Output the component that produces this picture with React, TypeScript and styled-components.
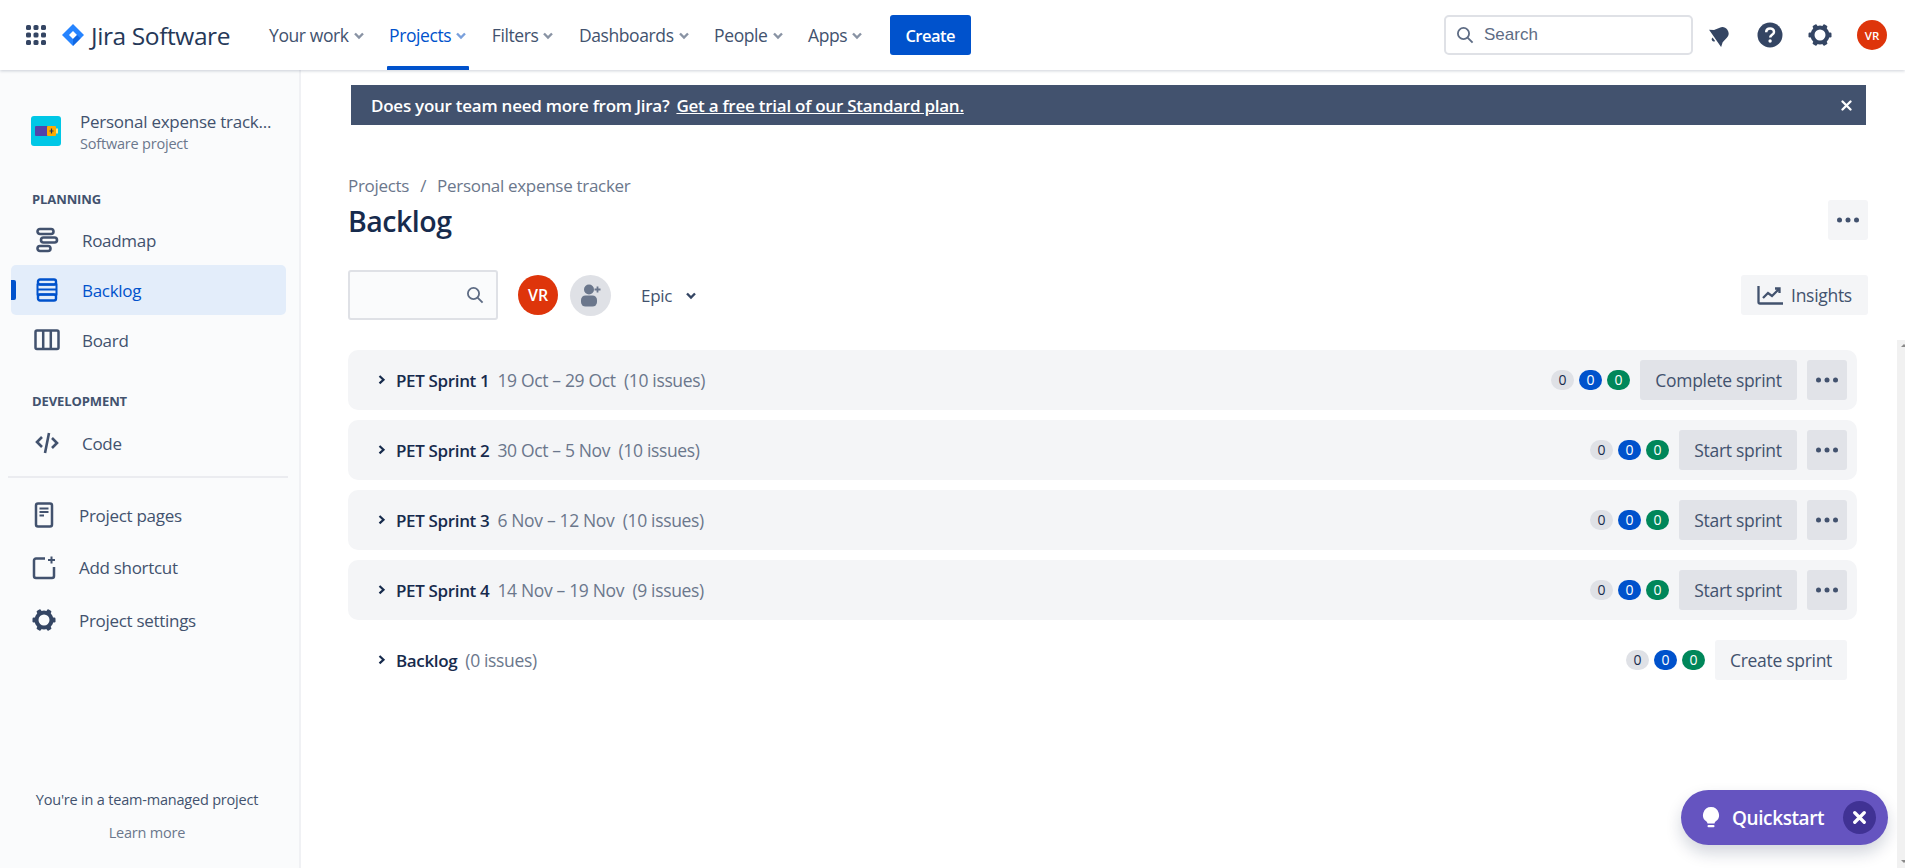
import React from "react";
import styled, { createGlobalStyle } from "styled-components";

const Global = createGlobalStyle`
  html, body { margin: 0; padding: 0; height: 100%; overflow: hidden; background: #fff; }
  body { font-family: "Open Sans", "Noto Sans", "Liberation Sans", sans-serif; color: #42526e; }
  * { box-sizing: border-box; }
`;

const Page = styled.div`
  width: 1905px;
  height: 868px;
  display: flex;
  flex-direction: column;
  overflow: hidden;
`;
const TopBar = styled.header`
  height: 70px;
  flex: none;
  display: flex;
  align-items: center;
  padding: 0 18px 0 26px;
  background: #fff;
  box-shadow: 0 1px 3px rgba(9, 30, 66, 0.2);
  position: relative;
  z-index: 2;
`;
const Logo = styled.div`
  display: flex;
  align-items: center;
  gap: 7px;
  margin-left: 16px;
  width: 204px;
  font-size: 24.5px;
  color: #253858;
  letter-spacing: -0.4px;
`;
const NavItem = styled.div<{ $active?: boolean }>`
  height: 70px;
  display: flex;
  align-items: center;
  gap: 1px;
  padding: 0 3px;
  margin-right: 15.5px;
  font-size: 17.5px;
  letter-spacing: -0.4px;
  color: ${(p) => (p.$active ? "#0052cc" : "#42526e")};
  position: relative;
  svg { color: ${(p) => (p.$active ? "#7aa0dc" : "#8993a4")}; }
`;
const ActiveLine = styled.span`
  position: absolute;
  left: 1px;
  right: 4px;
  bottom: 0;
  height: 4px;
  background: #0052cc;
  border-radius: 1px 1px 0 0;
`;
const CreateButton = styled.button`
  width: 81px;
  height: 40px;
  margin-left: 5px;
  border: 0;
  border-radius: 3px;
  background: #0052cc;
  color: #fff;
  font: 600 16.5px "Open Sans", sans-serif;
  letter-spacing: -0.5px;
`;
const Spacer = styled.div`
  flex: 1;
`;
const SearchBox = styled.div`
  width: 249px;
  height: 40px;
  border: 2px solid #dfe1e6;
  border-radius: 5px;
  display: flex;
  align-items: center;
  gap: 10px;
  padding-left: 10px;
  font: 17px "Liberation Sans", sans-serif;
  color: #5e6c84;
`;
const TopIcons = styled.div`
  display: flex;
  align-items: center;
  margin-left: 15px;
  gap: 25px;
`;
const Avatar = styled.div<{ $size: number; $left?: number }>`
  width: ${(p) => p.$size}px;
  height: ${(p) => p.$size}px;
  margin-left: ${(p) => p.$left ?? 0}px;
  border-radius: 50%;
  background: #de350b;
  color: #fff;
  font-weight: 600;
  font-size: ${(p) => (p.$size > 35 ? 16 : 11.5)}px;
  display: flex;
  align-items: center;
  justify-content: center;
`;
const Body = styled.div`
  flex: 1;
  display: flex;
  min-height: 0;
`;
const Sidebar = styled.aside`
  width: 301px;
  flex: none;
  background: #fafbfc;
  border-right: 2px solid #f0f1f4;
  padding: 0 13px 0 11px;
  display: flex;
  flex-direction: column;
`;
const ProjectHead = styled.div`
  display: flex;
  align-items: center;
  height: 64px;
  margin-top: 29px;
  padding-left: 20px;
  gap: 19px;
`;
const ProjectText = styled.div`
  padding-top: 2px;
`;
const ProjectName = styled.div`
  font-size: 17px;
  font-weight: 500;
  line-height: 23px;
  color: #42526e;
  letter-spacing: -0.25px;
  white-space: nowrap;
`;
const ProjectType = styled.div`
  font-size: 14.5px;
  line-height: 21px;
  color: #6b778c;
  letter-spacing: -0.2px;
`;
const SectionLabel = styled.div<{ $top: number; $bottom: number }>`
  margin: ${(p) => p.$top}px 0 ${(p) => p.$bottom}px 21px;
  height: 18px;
  font-size: 13px;
  font-weight: 700;
  line-height: 18px;
  color: #42526e;
  letter-spacing: -0.1px;
`;
const SideItem = styled.div<{ $active?: boolean }>`
  position: relative;
  height: 50px;
  display: flex;
  align-items: center;
  gap: 22px;
  padding-left: 23px;
  border-radius: 5px;
  font-size: 17px;
  letter-spacing: -0.3px;
  color: ${(p) => (p.$active ? "#0052cc" : "#42526e")};
  background: ${(p) => (p.$active ? "#e3edfa" : "transparent")};
`;
const IconSlot = styled.span<{ $w: number }>`
  width: ${(p) => p.$w}px;
  flex: none;
  display: flex;
  align-items: center;
  justify-content: center;
`;
const SideMark = styled.span`
  position: absolute;
  left: 0;
  top: 15px;
  width: 5px;
  height: 20px;
  background: #0052cc;
  border-radius: 0 2px 2px 0;
`;
const Divider = styled.div`
  height: 2px;
  margin: 8px 0 11px -3px;
  width: 280px;
  background: #ebecf0;
`;
const LinkItem = styled.div`
  height: 52.5px;
  display: flex;
  align-items: center;
  gap: 23px;
  padding-left: 21px;
  font-size: 17px;
  letter-spacing: -0.3px;
  color: #42526e;
`;
const SideFoot = styled.div`
  margin-top: auto;
  margin-bottom: 25px;
  text-align: center;
  padding-right: 3px;
  font-size: 14.5px;
  line-height: 20px;
  letter-spacing: -0.2px;
  color: #42526e;
`;
const LearnMore = styled.div`
  margin-top: 13px;
  font-weight: 500;
  color: #6b778c;
`;
const Main = styled.main`
  flex: 1;
  min-width: 0;
  padding: 15px 0 0 47px;
  position: relative;
`;
const Banner = styled.div`
  width: 1515px;
  height: 40px;
  margin-left: 3px;
  background: #42526e;
  color: #fff;
  display: flex;
  align-items: center;
  justify-content: space-between;
  padding: 0 14px 0 20px;
  font-size: 17px;
  font-weight: 600;
  letter-spacing: -0.25px;
`;
const BannerLink = styled.span`
  text-decoration: underline;
  margin-left: 7px;
`;
const Breadcrumb = styled.div`
  margin-top: 49px;
  height: 24px;
  display: flex;
  gap: 11px;
  font-size: 17px;
  line-height: 24px;
  letter-spacing: -0.3px;
  color: #6b778c;
`;
const TitleRow = styled.div`
  display: flex;
  justify-content: space-between;
  align-items: center;
  width: 1520px;
  height: 40px;
  margin-top: 2px;
`;
const Title = styled.h1`
  margin: 0;
  padding-top: 2px;
  font-size: 28.5px;
  font-weight: 600;
  letter-spacing: -0.5px;
  color: #172b4d;
`;
const GhostButton = styled.div<{ $w?: number; $strong?: boolean }>`
  height: 40px;
  width: ${(p) => (p.$w ? `${p.$w}px` : "auto")};
  flex: none;
  border-radius: 3px;
  display: flex;
  align-items: center;
  justify-content: center;
  gap: 8px;
  background: ${(p) => (p.$strong ? "#e1e3e8" : "#f4f5f7")};
  color: #42526e;
  font-size: 17.5px;
  font-weight: 500;
  letter-spacing: -0.3px;
`;
const Toolbar = styled.div`
  display: flex;
  align-items: center;
  width: 1520px;
  height: 50px;
  margin-top: 30px;
`;
const FilterBox = styled.div`
  width: 150px;
  height: 50px;
  border: 2px solid #dfe1e6;
  border-radius: 3px;
  background: #fafbfc;
  display: flex;
  align-items: center;
  justify-content: flex-end;
  padding-right: 12px;
`;
const AddUser = styled.div`
  width: 41px;
  height: 41px;
  border-radius: 50%;
  background: #dfe1e6;
  margin-left: 12px;
  display: flex;
  align-items: center;
  justify-content: center;
`;
const EpicFilter = styled.div`
  margin-left: 30px;
  display: flex;
  align-items: center;
  gap: 10px;
  font-size: 17px;
  font-weight: 500;
  color: #42526e;
  letter-spacing: -0.3px;
  svg { color: #344563; }
`;
const List = styled.div`
  margin-top: 30px;
  width: 1509px;
  display: flex;
  flex-direction: column;
  gap: 10px;
`;
const SprintRow = styled.div<{ $plain?: boolean }>`
  height: 60px;
  display: flex;
  align-items: center;
  padding: 0 10px 0 28px;
  border-radius: 10px;
  background: ${(p) => (p.$plain ? "transparent" : "#f4f5f7")};
`;
const SprintName = styled.span`
  margin-left: 8px;
  font-size: 17px;
  font-weight: 600;
  letter-spacing: -0.35px;
  color: #172b4d;
`;
const SprintMeta = styled.span`
  margin-left: 8px;
  font-size: 17.5px;
  letter-spacing: -0.35px;
  color: #6b778c;
  white-space: pre;
`;
const Badges = styled.div`
  margin-left: auto;
  display: flex;
  gap: 5px;
  margin-right: 10px;
`;
const Badge = styled.span<{ $bg: string; $fg: string }>`
  width: 23px;
  height: 20px;
  border-radius: 10px;
  background: ${(p) => p.$bg};
  color: ${(p) => p.$fg};
  font-size: 14px;
  line-height: 20px;
  text-align: center;
`;
const RowActions = styled.div`
  display: flex;
  gap: 10px;
`;
const Quickstart = styled.div`
  position: absolute;
  left: 1380px;
  bottom: 23px;
  width: 207px;
  height: 55px;
  border-radius: 28px;
  background: #6554c0;
  color: #fff;
  display: flex;
  align-items: center;
  padding-left: 21px;
  gap: 12px;
  font-size: 19px;
  font-weight: 600;
  letter-spacing: -0.4px;
  box-shadow: 0 8px 16px rgba(9, 30, 66, 0.18);
`;
const QuickClose = styled.span`
  position: absolute;
  right: 12px;
  top: 11px;
  width: 33px;
  height: 33px;
  border-radius: 50%;
  background: #403294;
  display: flex;
  align-items: center;
  justify-content: center;
`;
const Scrollbar = styled.div`
  position: absolute;
  right: 0;
  top: 270px;
  bottom: 0;
  width: 8px;
  background: #f1f1f1;
  &::before, &::after {
    content: "";
    position: absolute;
    right: -2px;
    border-left: 3px solid transparent;
    border-right: 3px solid transparent;
  }
  &::before { top: 4px; border-bottom: 3px solid #8a8a8a; }
  &::after { bottom: 5px; border-top: 3px solid #8a8a8a; }
`;

const Chevron = () => (
  <svg width="18" height="18" viewBox="0 0 18 18" fill="none" stroke="currentColor" strokeWidth="2.4">
    <path d="M5 7.5l4 4 4-4" />
  </svg>
);
const Dots = () => (
  <svg width="24" height="6" viewBox="0 0 24 6" fill="#42526e">
    <circle cx="3.5" cy="3" r="2.5" />
    <circle cx="12" cy="3" r="2.5" />
    <circle cx="20.5" cy="3" r="2.5" />
  </svg>
);
const SearchIcon = ({ color = "#5e6c84", size = 18 }: { color?: string; size?: number }) => (
  <svg width={size} height={size} viewBox="0 0 18 18" fill="none" stroke={color} strokeWidth="1.8">
    <circle cx="7.5" cy="7.5" r="5.6" />
    <path d="M11.6 11.6l5 5" />
  </svg>
);
const RowChevron = () => (
  <svg width="12" height="12" viewBox="0 0 12 12" fill="none" stroke="#172b4d" strokeWidth="2.2">
    <path d="M3.5 2l4 3.7-4 3.7" />
  </svg>
);
const GridIcon = () => (
  <svg width="20" height="20" viewBox="0 0 20 20" fill="#344563">
    {[0, 1, 2].flatMap((r) =>
      [0, 1, 2].map((c) => <rect key={`${r}${c}`} x={c * 7.5} y={r * 7.5} width="5" height="5" rx="1.6" />)
    )}
  </svg>
);
const JiraMark = () => (
  <svg width="22" height="22" viewBox="0 0 22 22">
    <path d="M11 0l11 11-11 11L0 11z" fill="#2684ff" />
    <path d="M11 7l4 4-4 4-4-4z" fill="#fff" />
    <path d="M11 15l4-4 3.5 3.5L11 22z" fill="#0052cc" opacity="0.55" />
  </svg>
);
const Bell = () => (
  <svg width="24" height="24" viewBox="0 0 24 24" fill="#344563">
    <g transform="rotate(55 12 12)">
      <path d="M12 3c-3.500 0-5.600 2-6.200 5L4.500 14 1.500 18h21l-3-4-1.300-6c-.6-3-2.700-5-6.200-5z" />
      <path d="M9.800 19.500h4.400a2.200 2.200 0 0 1-4.400 0z" />
    </g>
  </svg>
);
const Help = () => (
  <svg width="26" height="26" viewBox="0 0 26 26">
    <circle cx="13" cy="13" r="12.5" fill="#344563" />
    <path d="M9.2 10.2c0-5 7.8-5 7.8-.3 0 3-3.8 2.8-3.8 5.6" fill="none" stroke="#fff" strokeWidth="2.5" />
    <circle cx="13.1" cy="19" r="1.7" fill="#fff" />
  </svg>
);
const Gear = ({ size = 24 }: { size?: number }) => (
  <svg width={size} height={size} viewBox="0 0 24 24">
    <circle cx="12" cy="12" r="7.5" fill="none" stroke="#344563" strokeWidth="4" />
    {[0, 60, 120, 180, 240, 300].map((a) => (
      <rect key={a} x="9.6" y="0.5" width="4.8" height="4.5" rx="1.2" fill="#344563" transform={`rotate(${a + 30} 12 12)`} />
    ))}
  </svg>
);
const ProjectIcon = () => (
  <svg width="30" height="30" viewBox="0 0 30 30">
    <rect width="30" height="30" rx="3" fill="#00c7e6" />
    <rect x="4" y="10" width="13" height="10" rx="1" fill="#5243aa" />
    <rect x="16" y="10" width="9" height="10" rx="1" fill="#ffab00" />
    <rect x="25" y="12.5" width="2" height="5" fill="#ffe380" />
    <path d="M20.5 12.5v5M18.500 15h4" stroke="#253858" strokeWidth="1.2" />
  </svg>
);
const RoadmapIcon = () => (
  <svg width="24" height="26" viewBox="0 0 24 26" fill="none" stroke="#42526e" strokeWidth="2.6">
    <rect x="2.5" y="2" width="16" height="5" rx="2.5" />
    <rect x="6" y="10.5" width="16" height="5" rx="2.5" />
    <rect x="2.5" y="19" width="13" height="5" rx="2.5" />
  </svg>
);
const BacklogIcon = () => (
  <svg width="24" height="24" viewBox="0 0 24 24" fill="none" stroke="#0052cc" strokeWidth="2.4">
    <rect x="3" y="1.500" width="18" height="5" rx="2" />
    <path d="M2.500 6.500h19v5h-19zM2.500 11.500h19v5h-19z" strokeWidth="2" />
    <rect x="3" y="16.500" width="18" height="6" rx="2" />
  </svg>
);
const BoardIcon = () => (
  <svg width="26" height="22" viewBox="0 0 26 22" fill="none" stroke="#42526e" strokeWidth="2.5">
    <rect x="1.5" y="1.5" width="23" height="18.5" rx="1.5" />
    <path d="M9.200 1.500v18.500M16.800 1.500v18.500" />
  </svg>
);
const CodeIcon = () => (
  <svg width="24" height="22" viewBox="0 0 24 22" fill="none" stroke="#42526e" strokeWidth="2.6">
    <path d="M7 5l-5 5 5 5M17 6l5 5-5 5M14 1L10 21" />
  </svg>
);
const PagesIcon = () => (
  <svg width="20" height="26" viewBox="0 0 20 26" fill="none" stroke="#42526e" strokeWidth="2.5">
    <rect x="2" y="1.5" width="16" height="23" rx="2" />
    <path d="M5.500 6.500h9M5.500 10h9M5.500 13.500h4.500" strokeWidth="2" />
  </svg>
);
const ShortcutIcon = () => (
  <svg width="24" height="24" viewBox="0 0 24 24" fill="none" stroke="#42526e" strokeWidth="2.5">
    <path d="M13 2.500H4a2 2 0 0 0-2 2V20a2 2 0 0 0 2 2h16a2 2 0 0 0 2-2v-9" />
    <path d="M19.500 0.500v7M16 4h7" strokeWidth="2" />
  </svg>
);
const AddUserIcon = () => (
  <svg width="24" height="24" viewBox="0 0 24 24" fill="#6b778c">
    <circle cx="10" cy="6.500" r="5" />
    <rect x="2" y="12.500" width="16" height="11" rx="4.500" />
    <path d="M18.500 3.500v6M15.500 6.500h6" stroke="#6b778c" strokeWidth="1.800" />
  </svg>
);
const InsightsIcon = () => (
  <svg width="26" height="20" viewBox="0 0 26 20" fill="none" stroke="#42526e" strokeWidth="2.3">
    <path d="M1.500 1v16a1.500 1.500 0 0 0 1.500 1.500h23" />
    <path d="M6 13l5-5 4 3 7-7M18 3.500h4.500V8" />
  </svg>
);
const CloseX = ({ size = 11, weight = 2.3 }: { size?: number; weight?: number }) => (
  <svg width={size} height={size} viewBox="0 0 11 11" stroke="#fff" strokeWidth={weight} strokeLinecap="round">
    <path d="M1.500 1.500l8 8M9.500 1.500l-8 8" />
  </svg>
);
const BulbIcon = () => (
  <svg width="18" height="22" viewBox="0 0 18 22" fill="#fff">
    <path d="M9 0a8 8 0 0 0-4.500 14.600c.6.5.9 1.200 1 2h7c.1-.8.4-1.500 1-2A8 8 0 0 0 9 0z" />
    <rect x="5.500" y="18" width="7" height="2.200" rx="1" />
  </svg>
);

const navItems = ["Your work", "Projects", "Filters", "Dashboards", "People", "Apps"];
const sprints = [
  { name: "PET Sprint 1", meta: "19 Oct – 29 Oct  (10 issues)", action: "Complete sprint", w: 157 },
  { name: "PET Sprint 2", meta: "30 Oct – 5 Nov  (10 issues)", action: "Start sprint", w: 118 },
  { name: "PET Sprint 3", meta: "6 Nov – 12 Nov  (10 issues)", action: "Start sprint", w: 118 },
  { name: "PET Sprint 4", meta: "14 Nov – 19 Nov  (9 issues)", action: "Start sprint", w: 118 },
];

const CountBadges = () => (
  <Badges>
    <Badge $bg="#dfe1e6" $fg="#172b4d">0</Badge>
    <Badge $bg="#0052cc" $fg="#fff">0</Badge>
    <Badge $bg="#00875a" $fg="#fff">0</Badge>
  </Badges>
);

export default function App() {
  return (
    <Page>
      <Global />
      <TopBar>
        <GridIcon />
        <Logo>
          <JiraMark />
          <span>Jira Software</span>
        </Logo>
        {navItems.map((n) => (
          <NavItem key={n} $active={n === "Projects"}>
            {n}
            <Chevron />
            {n === "Projects" && <ActiveLine />}
          </NavItem>
        ))}
        <CreateButton>Create</CreateButton>
        <Spacer />
        <SearchBox>
          <SearchIcon />
          Search
        </SearchBox>
        <TopIcons>
          <Bell />
          <Help />
          <Gear size={24} />
          <Avatar $size={30}>VR</Avatar>
        </TopIcons>
      </TopBar>
      <Body>
        <Sidebar>
          <ProjectHead>
            <ProjectIcon />
            <ProjectText>
              <ProjectName>Personal expense track...</ProjectName>
              <ProjectType>Software project</ProjectType>
            </ProjectText>
          </ProjectHead>
          <SectionLabel $top={27} $bottom={7}>PLANNING</SectionLabel>
          <SideItem>
            <IconSlot $w={26}><RoadmapIcon /></IconSlot>
            Roadmap
          </SideItem>
          <SideItem $active>
            <SideMark />
            <IconSlot $w={26}><BacklogIcon /></IconSlot>
            Backlog
          </SideItem>
          <SideItem>
            <IconSlot $w={26}><BoardIcon /></IconSlot>
            Board
          </SideItem>
          <SectionLabel $top={27} $bottom={8}>DEVELOPMENT</SectionLabel>
          <SideItem>
            <IconSlot $w={26}><CodeIcon /></IconSlot>
            Code
          </SideItem>
          <Divider />
          <LinkItem>
            <IconSlot $w={24}><PagesIcon /></IconSlot>
            Project pages
          </LinkItem>
          <LinkItem>
            <IconSlot $w={24}><ShortcutIcon /></IconSlot>
            Add shortcut
          </LinkItem>
          <LinkItem>
            <IconSlot $w={24}><Gear size={24} /></IconSlot>
            Project settings
          </LinkItem>
          <SideFoot>
            You're in a team-managed project
            <LearnMore>Learn more</LearnMore>
          </SideFoot>
        </Sidebar>
        <Main>
          <Banner>
            <span>
              Does your team need more from Jira?
              <BannerLink>Get a free trial of our Standard plan.</BannerLink>
            </span>
            <CloseX />
          </Banner>
          <Breadcrumb>
            <span>Projects</span>
            <span>/</span>
            <span>Personal expense tracker</span>
          </Breadcrumb>
          <TitleRow>
            <Title>Backlog</Title>
            <GhostButton $w={40}><Dots /></GhostButton>
          </TitleRow>
          <Toolbar>
            <FilterBox>
              <SearchIcon />
            </FilterBox>
            <Avatar $size={40} $left={20}>VR</Avatar>
            <AddUser>
              <AddUserIcon />
            </AddUser>
            <EpicFilter>
              Epic
              <Chevron />
            </EpicFilter>
            <Spacer />
            <GhostButton $w={127}>
              <InsightsIcon />
              Insights
            </GhostButton>
          </Toolbar>
          <List>
            {sprints.map((s) => (
              <SprintRow key={s.name}>
                <RowChevron />
                <SprintName>{s.name}</SprintName>
                <SprintMeta>{s.meta}</SprintMeta>
                <CountBadges />
                <RowActions>
                  <GhostButton $strong $w={s.w}>{s.action}</GhostButton>
                  <GhostButton $strong $w={40}><Dots /></GhostButton>
                </RowActions>
              </SprintRow>
            ))}
            <SprintRow $plain>
              <RowChevron />
              <SprintName>Backlog</SprintName>
              <SprintMeta>(0 issues)</SprintMeta>
              <CountBadges />
              <GhostButton $w={132}>Create sprint</GhostButton>
            </SprintRow>
          </List>
          <Quickstart>
            <BulbIcon />
            Quickstart
            <QuickClose><CloseX size={13} weight={2.8} /></QuickClose>
          </Quickstart>
          <Scrollbar />
        </Main>
      </Body>
    </Page>
  );
}
